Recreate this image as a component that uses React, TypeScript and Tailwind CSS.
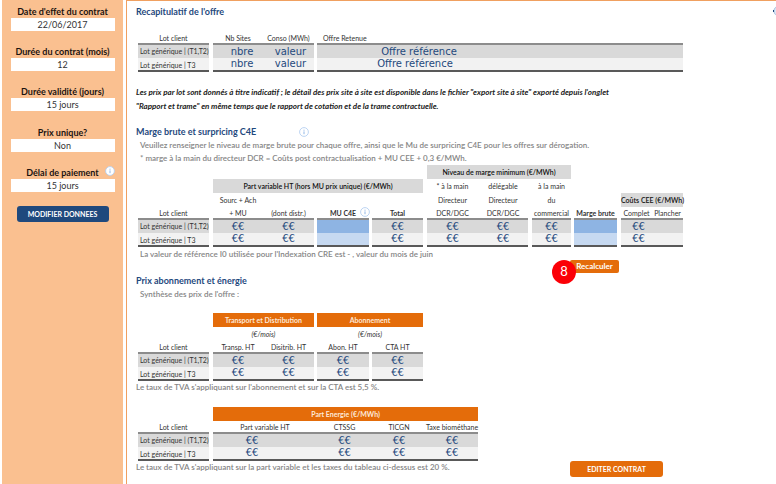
import type { ReactNode } from "react";

const EURO = "€€";

function Info() {
  return (
    <svg viewBox="0 0 10 10" className="size-[10px] shrink-0" role="img" aria-label="Information">
      <circle cx="5" cy="5" r="4.4" fill="#fff" stroke="#b5d0f0" strokeWidth="0.9" />
      <path d="M5 4.4v2.8M5 2.7v1" stroke="#8fb6e6" strokeWidth="1" />
    </svg>
  );
}

function Field({ id, label, value, info }: { id: string; label: string; value: string; info?: boolean }) {
  return (
    <div className="relative flex flex-col">
      <label htmlFor={id} className="h-[13px] text-center text-[9px] leading-[13px] font-bold whitespace-nowrap text-[#1c1410]">
        {label}
      </label>
      <input
        id={id}
        defaultValue={value}
        className="mx-auto h-[13px] w-[104px] bg-white text-center text-[9px] leading-[13px] text-[#333] outline-none"
      />
      {info && (
        <span className="absolute top-0 right-0">
          <Info />
        </span>
      )}
    </div>
  );
}

function Title({ children }: { children: ReactNode }) {
  return <h2 className="h-[14px] text-[9px] leading-[14px] font-bold text-[#1f497d]">{children}</h2>;
}

function Note({ children }: { children: ReactNode }) {
  return <p className="text-[8px] leading-[13px] font-semibold whitespace-nowrap text-[#858585]">{children}</p>;
}

function Cols({ widths }: { widths: string[] }) {
  return (
    <colgroup>
      {widths.map((w, i) => (
        <col key={i} className={w} />
      ))}
    </colgroup>
  );
}

const table = "table-fixed border-separate border-spacing-0 text-[7px] leading-[9px] whitespace-nowrap text-[#333]";
const head = "h-[13px] border-b-2 border-[#8c8c8c] p-0 text-center align-bottom font-normal";
const headBold = "relative h-[13px] border-b-2 border-[#8c8c8c] p-0 text-center align-bottom font-bold";
const band = "h-[14px] bg-[#d9d9d9] p-0 text-center font-semibold text-[#111]";
const sub = "h-[14px] p-0 text-center font-normal";
const orange = "h-[14px] bg-[#e46c0a] p-0 text-center font-bold text-[#fde9d9]";

function Lot({ last }: { last?: boolean }) {
  return (
    <th
      scope="row"
      className={
        last
          ? "h-[14px] border-b-2 border-[#595959] bg-[#f2f2f2] p-0 pl-[2px] text-left align-bottom font-normal"
          : "h-[13px] bg-[#d9d9d9] p-0 pl-[2px] text-left align-middle font-normal"
      }
    >
      {last ? "Lot générique | T3" : "Lot générique | (T1,T2)"}
    </th>
  );
}

function Val({ last, children }: { last?: boolean; children?: ReactNode }) {
  return (
    <td
      className={
        last
          ? "h-[14px] border-b-2 border-[#595959] bg-[#f2f2f2] p-0 text-center font-['DejaVu_Sans',sans-serif] text-[10px] leading-[12px] text-[#1f497d]"
          : "h-[13px] bg-[#d9d9d9] p-0 text-center font-['DejaVu_Sans',sans-serif] text-[10px] leading-[12px] text-[#1f497d]"
      }
    >
      {children}
    </td>
  );
}

function Entry({ last, label }: { last?: boolean; label: string }) {
  return (
    <td className={last ? "h-[14px] border-b-2 border-[#595959] bg-[#c6d9f1] p-0" : "h-[13px] bg-[#8eb4e3] p-0"}>
      <input aria-label={label} className="block h-[12px] w-full bg-transparent text-center text-[9px] outline-none" />
    </td>
  );
}

const Gap = () => <td className="p-0" />;

function Summary() {
  return (
    <table className={`${table} w-[545px]`}>
      <Cols widths={["w-[71px]", "w-[4px]", "w-[50px]", "w-[51px]", "w-[3px]", "w-[366px]"]} />
      <thead>
        <tr>
          <th className={head}>Lot client</th>
          <Gap />
          <th className={head}>Nb Sites</th>
          <th className={head}>Conso (MWh)</th>
          <Gap />
          <th className="h-[13px] border-b-2 border-[#8c8c8c] p-0 pl-[6px] text-left align-bottom font-normal">Offre Retenue</th>
        </tr>
      </thead>
      <tbody>
        {[false, true].map((last) => (
          <tr key={String(last)}>
            <Lot last={last} />
            <Gap />
            <Val last={last}>
              <span className="pl-2">nbre</span>
            </Val>
            <Val last={last}>
              <span className="pl-1">valeur</span>
            </Val>
            <Gap />
            <Val last={last}>
              <span className={last ? "pr-[170px]" : "pr-[162px]"}>Offre référence</span>
            </Val>
          </tr>
        ))}
      </tbody>
    </table>
  );
}

function Margins() {
  return (
    <table className={`${table} w-[545px]`}>
      <Cols
        widths={[
          "w-[71px]", "w-[4px]", "w-[50px]", "w-[51px]", "w-[3px]", "w-[52px]", "w-[3px]", "w-[51px]", "w-[4px]",
          "w-[51px]", "w-[50px]", "w-[4px]", "w-[39px]", "w-[3px]", "w-[43px]", "w-[4px]", "w-[31px]", "w-[31px]",
        ]}
      />
      <thead>
        <tr>
          <td colSpan={9} className="h-[14px] p-0" />
          <th colSpan={4} className={band}>Niveau de marge minimum (€/MWh)</th>
          <td colSpan={5} className="p-0" />
        </tr>
        <tr>
          <td colSpan={2} className="p-0" />
          <th colSpan={6} className={band}>Part variable HT (hors MU prix unique) (€/MWh)</th>
          <Gap />
          <th className={sub}>* à la main</th>
          <th className={sub}>délégable</th>
          <Gap />
          <th className={sub}>à la main</th>
          <td colSpan={5} className="p-0" />
        </tr>
        <tr>
          <td colSpan={2} className="p-0" />
          <th className={sub}>Sourc + Ach</th>
          <td colSpan={6} className="p-0" />
          <th className={sub}>Directeur</th>
          <th className={sub}>Directeur</th>
          <Gap />
          <th className={sub}>du</th>
          <td colSpan={3} className="p-0" />
          <th colSpan={2} className={band}>Coûts CEE (€/MWh)</th>
        </tr>
        <tr>
          <th className={head}>Lot client</th>
          <Gap />
          <th className={head}>+ MU</th>
          <th className={head}>(dont distr.)</th>
          <Gap />
          <th className={headBold}>
            MU C4E
            <span className="absolute -right-px bottom-px">
              <Info />
            </span>
          </th>
          <Gap />
          <th className={headBold}>Total</th>
          <Gap />
          <th className={head}>DCR/DGC</th>
          <th className={head}>DCR/DGC</th>
          <Gap />
          <th className={head}>commercial</th>
          <Gap />
          <th className={headBold}>Marge brute</th>
          <Gap />
          <th className={head}>Complet</th>
          <th className={head}>Plancher</th>
        </tr>
      </thead>
      <tbody>
        {[false, true].map((last) => (
          <tr key={String(last)}>
            <Lot last={last} />
            <Gap />
            <Val last={last}>{EURO}</Val>
            <Val last={last}>{EURO}</Val>
            <Gap />
            <Entry last={last} label="MU C4E" />
            <Gap />
            <Val last={last}>{EURO}</Val>
            <Gap />
            <Val last={last}>{EURO}</Val>
            <Val last={last}>{EURO}</Val>
            <Gap />
            <Val last={last}>{EURO}</Val>
            <Gap />
            <Entry last={last} label="Marge brute" />
            <Gap />
            <Val last={last}>
              <span className="pl-1">{EURO}</span>
            </Val>
            <Val last={last} />
          </tr>
        ))}
      </tbody>
    </table>
  );
}

function Subscription() {
  return (
    <table className={`${table} w-[285px]`}>
      <Cols widths={["w-[71px]", "w-[4px]", "w-[50px]", "w-[51px]", "w-[3px]", "w-[52px]", "w-[3px]", "w-[51px]"]} />
      <thead>
        <tr>
          <td colSpan={2} className="p-0" />
          <th colSpan={2} className={orange}>Transport et Distribution</th>
          <Gap />
          <th colSpan={3} className={orange}>Abonnement</th>
        </tr>
        <tr>
          <td colSpan={2} className="p-0" />
          <th colSpan={2} className={`${sub} italic`}>(€/mois)</th>
          <Gap />
          <th colSpan={3} className={`${sub} italic`}>(€/mois)</th>
        </tr>
        <tr>
          <th className={head}>Lot client</th>
          <Gap />
          <th className={head}>Transp. HT</th>
          <th className={head}>Disitrib. HT</th>
          <Gap />
          <th className={head}>Abon. HT</th>
          <Gap />
          <th className={head}>CTA HT</th>
        </tr>
      </thead>
      <tbody>
        {[false, true].map((last) => (
          <tr key={String(last)}>
            <Lot last={last} />
            <Gap />
            <Val last={last}>{EURO}</Val>
            <Val last={last}>{EURO}</Val>
            <Gap />
            <Val last={last}>{EURO}</Val>
            <Gap />
            <Val last={last}>{EURO}</Val>
          </tr>
        ))}
      </tbody>
    </table>
  );
}

function Energy() {
  return (
    <table className={`${table} w-[340px]`}>
      <Cols widths={["w-[71px]", "w-[4px]", "w-[104px]", "w-[55px]", "w-[54px]", "w-[52px]"]} />
      <thead>
        <tr>
          <td colSpan={2} className="p-0" />
          <th colSpan={4} className={orange}>Part Energie (€/MWh)</th>
        </tr>
        <tr>
          <th className={head}>Lot client</th>
          <Gap />
          <th className={head}>Part variable HT</th>
          <th className={head}>CTSSG</th>
          <th className={head}>TICGN</th>
          <th className={head}>Taxe biométhane</th>
        </tr>
      </thead>
      <tbody>
        {[false, true].map((last) => (
          <tr key={String(last)}>
            <Lot last={last} />
            <Gap />
            <Val last={last}>
              <span className="pr-[26px]">{EURO}</span>
            </Val>
            <Val last={last}>{EURO}</Val>
            <Val last={last}>{EURO}</Val>
            <Val last={last}>{EURO}</Val>
          </tr>
        ))}
      </tbody>
    </table>
  );
}

export default function App() {
  return (
    <div className="flex min-h-screen overflow-hidden bg-white font-[Lato,sans-serif]">
      <aside className="ml-[2px] w-[121px] shrink-0 bg-[#fac090] px-2 pt-[5px]">
        <form className="flex h-[217px] flex-col justify-between">
          <Field id="effet" label="Date d'effet du contrat" value="22/06/2017" />
          <Field id="duree" label="Durée du contrat (mois)" value="12" />
          <Field id="validite" label="Durée validité (jours)" value="15 jours" />
          <Field id="unique" label="Prix unique?" value="Non" />
          <Field id="delai" label="Délai de paiement" value="15 jours" info />
          <button
            type="button"
            className="mx-auto h-4 w-[92px] rounded-[3px] bg-[#1f497d] text-[7px] leading-4 font-bold whitespace-nowrap text-white"
          >
            MODIFIER DONNEES
          </button>
        </form>
      </aside>

      <main className="relative ml-[3px] flex min-w-0 flex-1 flex-col border-t border-l border-[#f0a060] pl-[9px]">
        <svg viewBox="0 0 3 12" className="absolute top-1 right-0 h-3 w-[3px]" aria-hidden="true">
          <circle cx="6" cy="6" r="5" fill="#dce6f4" stroke="#a9c0e0" strokeWidth="1" />
          <path d="M0 6h1" stroke="#1f497d" strokeWidth="2" />
        </svg>

        <section className="pt-1">
          <Title>Recapitulatif de l'offre</Title>
          <div className="pt-[13px] pl-[2px]">
            <Summary />
          </div>
          <p className="pt-[13px] text-[8px] leading-[14px] font-bold whitespace-nowrap text-[#222] italic">
            Les prix par lot sont donnés à titre indicatif ; le détail des prix site à site est disponible dans le fichier "export site à site" exporté depuis l'onglet
            <br />
            "Rapport et trame" en même temps que le rapport de cotation et de la trame contractuelle.
          </p>
        </section>

        <section className="pt-[12px]">
          <div className="flex items-center gap-[43px]">
            <Title>Marge brute et surpricing C4E</Title>
            <Info />
          </div>
          <div className="pl-1">
            <Note>Veuillez renseigner le niveau de marge brute pour chaque offre, ainsi que le Mu de surpricing C4E pour les offres sur dérogation.</Note>
            <Note>* marge à la main du directeur DCR = Coûts post contractualisation + MU CEE + 0,3 €/MWh.</Note>
          </div>
          <div className="pl-[2px]">
            <Margins />
          </div>
          <div className="flex w-[483px] items-start justify-between pt-px pl-1">
            <Note>La valeur de référence I0 utilisée pour l'Indexation CRE est - , valeur du mois de juin</Note>
            <div className="relative pt-3">
              <button className="block h-[13px] w-[49px] rounded-[2px] bg-[#e46c0a] text-[8px] leading-[13px] font-bold text-white">
                Recalculer
              </button>
              <span className="absolute top-3 -left-[18px] flex size-6 items-center justify-center rounded-full bg-[#fb0007] text-[13px] text-white">
                8
              </span>
            </div>
          </div>
        </section>

        <section className="pt-px">
          <Title>Prix abonnement et énergie</Title>
          <div className="pl-1">
            <Note>Synthèse des prix de l'offre :</Note>
          </div>
          <div className="pt-3 pl-[2px]">
            <Subscription />
          </div>
          <Note>Le taux de TVA s'appliquant sur l'abonnement et sur la CTA est 5,5 %.</Note>
          <div className="pt-[13px] pl-[2px]">
            <Energy />
          </div>
          <div className="flex w-[527px] items-start justify-between">
            <Note>Le taux de TVA s'appliquant sur la part variable et les taxes du tableau ci-dessus est 20 %.</Note>
            <button className="h-4 w-[93px] rounded-[3px] bg-[#e46c0a] text-[7px] leading-4 font-bold text-white">
              EDITER CONTRAT
            </button>
          </div>
        </section>
      </main>
    </div>
  );
}
